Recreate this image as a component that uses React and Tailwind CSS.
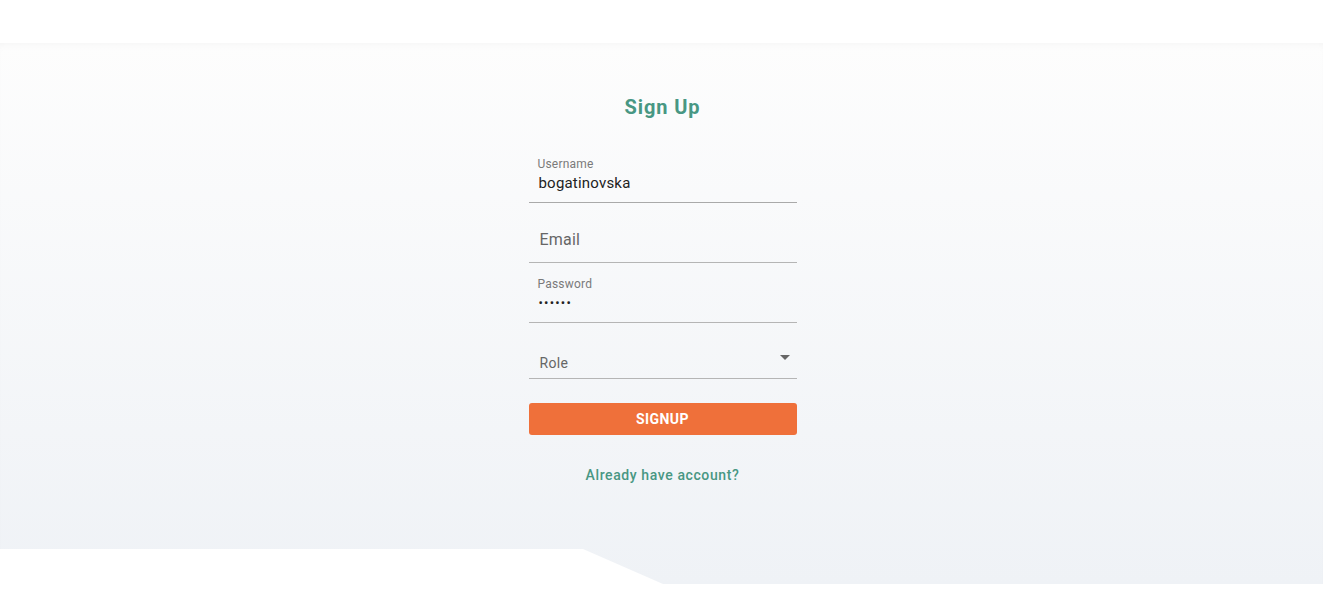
export default function App() {
  return (
    <div className="h-[593px] w-full overflow-hidden bg-white font-['Roboto',sans-serif]">
      <div className="h-[43px] bg-white" />
      <main className="h-[541px] bg-gradient-to-b from-[#fdfdfd] to-[#eff2f6] shadow-[inset_0_6px_10px_-6px_rgba(0,0,0,0.05)] [clip-path:polygon(0_0,100%_0,100%_100%,663px_100%,583px_506px,0_506px)]">
        <div className="mx-auto flex w-[268px] translate-x-[1px] flex-col pt-[52px]">
          <h1 className="text-center text-[20px] font-bold leading-6 tracking-[0.9px] text-[#489783]">Sign Up</h1>

          {/* username */}
          <div className="mt-[24px] flex h-[60px] flex-col justify-end border-b border-[#a9a9a9] pb-[9px] pl-[9px]">
            <span className="text-[12px] leading-[14px] tracking-[0.2px] text-[#7a7a7a]">Username</span>
            <span className="mt-[2px] pl-[1px] text-[15px] leading-5 tracking-[0.2px] text-[#222]">bogatinovska</span>
          </div>

          {/* email */}
          <div className="flex h-[60px] flex-col justify-end border-b border-[#b5b5b5] pb-[10px] pl-[11px]">
            <span className="text-[16px] leading-6 tracking-[0.2px] text-[#666]">Email</span>
          </div>

          {/* password */}
          <div className="flex h-[60px] flex-col justify-end border-b border-[#b5b5b5] pb-[9px] pl-[9px]">
            <span className="text-[12px] leading-[14px] tracking-[0.2px] text-[#7a7a7a]">Password</span>
            <span className="mt-[2px] pl-[1px] text-[13px] leading-5 tracking-[1.2px] text-[#222]">••••••</span>
          </div>

          {/* role */}
          <div className="relative flex h-[56px] flex-col justify-end border-b border-[#b5b5b5] pb-[5px] pl-[11px]">
            <span className="text-[14px] leading-5 tracking-[0.3px] text-[#666]">Role</span>
            <span className="absolute right-[7px] top-[32px] h-0 w-0 border-x-[5px] border-t-[5px] border-x-transparent border-t-[#666]" />
          </div>

          <button className="mt-[24px] h-[32px] rounded-[3px] bg-[#ef703a] text-[14px] font-bold uppercase tracking-[0.4px] text-white">
            Signup
          </button>

          <a className="mt-[30px] text-center text-[14px] font-medium leading-5 tracking-[0.6px] text-[#489783]">Already have account?</a>
        </div>
      </main>
    </div>
  );
}
